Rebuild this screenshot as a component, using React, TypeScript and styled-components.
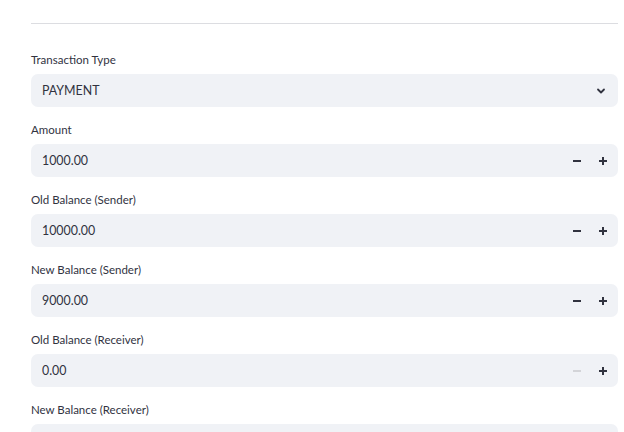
import React from "react";
import styled, { createGlobalStyle } from "styled-components";

const GlobalStyle = createGlobalStyle`
  html, body {
    margin: 0;
    padding: 0;
    background: #ffffff;
    font-family: Lato, "Noto Sans", sans-serif;
    color: #31333f;
  }
`;

const Page = styled.div`
  width: 587px;
  padding: 23px 0 0 31px;
  height: 409px;
  overflow: hidden;
`;

const Divider = styled.hr`
  margin: 0 0 28px 0;
  border: none;
  border-top: 1px solid #dcdde1;
`;

const Form = styled.div`
  display: flex;
  flex-direction: column;
  gap: 15px;
`;

const Field = styled.div`
  display: flex;
  flex-direction: column;
  gap: 6px;
`;

const Label = styled.label`
  font-size: 11.5px;
  line-height: 16px;
  height: 16px;
  color: #31333f;
`;

const Box = styled.div`
  height: 33px;
  background: #f0f2f6;
  border-radius: 7px;
  display: flex;
  align-items: center;
  padding: 0 11px;
  box-sizing: border-box;
`;

const Value = styled.span`
  flex: 1;
  font-size: 12.4px;
  color: #31333f;
`;

const Steppers = styled.div`
  display: flex;
  align-items: center;
  gap: 10px;
  margin-right: -4px;
`;

const StepButton = styled.button<{ $disabled?: boolean }>`
  width: 16px;
  height: 20px;
  padding: 0;
  border: none;
  background: none;
  display: flex;
  align-items: center;
  justify-content: center;
  color: ${(p) => (p.$disabled ? "#d3d4d8" : "#31333f")};
  cursor: ${(p) => (p.$disabled ? "not-allowed" : "pointer")};
`;

const Chevron = styled.span`
  display: flex;
  align-items: center;
  margin-right: 1px;
  color: #31333f;
`;

const Minus = () => (
  <svg width="8" height="8" viewBox="0 0 8 8">
    <rect x="0" y="3" width="8" height="2" fill="currentColor" />
  </svg>
);

const Plus = () => (
  <svg width="8" height="8" viewBox="0 0 8 8">
    <rect x="0" y="3" width="8" height="2" fill="currentColor" />
    <rect x="3" y="0" width="2" height="8" fill="currentColor" />
  </svg>
);

const NumberInput: React.FC<{ label: string; value: string; minDisabled?: boolean }> = ({
  label,
  value,
  minDisabled,
}) => (
  <Field>
    <Label>{label}</Label>
    <Box>
      <Value>{value}</Value>
      <Steppers>
        <StepButton $disabled={minDisabled}>
          <Minus />
        </StepButton>
        <StepButton>
          <Plus />
        </StepButton>
      </Steppers>
    </Box>
  </Field>
);

// the last input sits below the fold, its value is not in view
const fields = [
  { label: "Amount", value: "1000.00" },
  { label: "Old Balance (Sender)", value: "10000.00" },
  { label: "New Balance (Sender)", value: "9000.00" },
  { label: "Old Balance (Receiver)", value: "0.00", minDisabled: true },
  { label: "New Balance (Receiver)", value: "", minDisabled: true },
];

export default function App() {
  return (
    <>
      <GlobalStyle />
      <Page>
        <Divider />
        <Form>
          <Field>
            <Label>Transaction Type</Label>
            <Box>
              <Value>PAYMENT</Value>
              <Chevron>
                <svg width="10" height="10" viewBox="0 0 10 10">
                  <path
                    d="M2 3.5 L5 6.5 L8 3.5"
                    fill="none"
                    stroke="currentColor"
                    strokeWidth="1.8"
                    strokeLinecap="round"
                    strokeLinejoin="round"
                  />
                </svg>
              </Chevron>
            </Box>
          </Field>
          {fields.map((f) => (
            <NumberInput key={f.label} {...f} />
          ))}
        </Form>
      </Page>
    </>
  );
}
